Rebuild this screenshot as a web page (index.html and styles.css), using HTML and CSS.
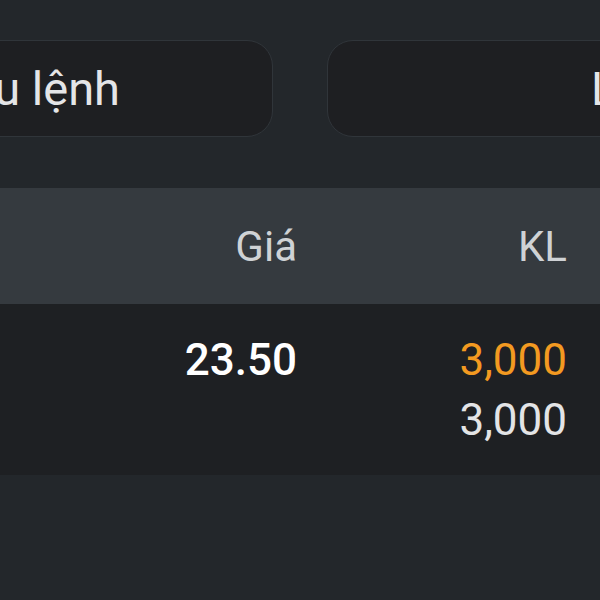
FILE: index.html
```html
<!DOCTYPE html>
<html lang="vi">
<head>
    <meta charset="UTF-8">
    <meta name="viewport" content="width=device-width, initial-scale=1.0">
    <title>Sổ lệnh</title>
    <link rel="stylesheet" href="styles.css">
</head>
<body>
<div class="screen">
    <div class="actions">
        <button class="action action-left">Lưu lệnh</button>
        <button class="action action-right">Lệnh mới</button>
    </div>

    <div class="table">
        <div class="row head">
            <div class="cell"></div>
            <div class="cell">Giá</div>
            <div class="cell">KL</div>
        </div>
        <div class="row body">
            <div class="cell"></div>
            <div class="cell price">23.50</div>
            <div class="cell">
                <div class="vol matched">3,000</div>
                <div class="vol">3,000</div>
            </div>
        </div>
    </div>
</div>
</body>
</html>
```

FILE: styles.css
```css
body {
    margin: 0;
    background-color: #23272b;
    font-family: Roboto, "Noto Sans", sans-serif;
    overflow: hidden;
}
.screen {
    width: 600px;
    height: 600px;
    overflow: hidden;
}
.actions {
    display: flex;
    gap: 54px;
    padding-top: 40px;
    margin-left: -230px;
    height: 97px;
    margin-bottom: 51px;
}
.action {
    flex: 0 0 503px;
    height: 97px;
    box-sizing: border-box;
    background-color: #1e1f22;
    border: 1px solid #30353a;
    border-radius: 26px;
    color: #e4e5e7;
    font-family: Roboto, "Noto Sans", sans-serif;
    font-size: 47px;
    display: flex;
    align-items: center;
    white-space: nowrap;
    overflow: hidden;
}
.action-left {
    justify-content: flex-end;
    padding-right: 152px;
}
.action-right {
    justify-content: flex-start;
    padding-left: 263px;
}
.row {
    display: grid;
    grid-template-columns: 1fr 200px 270px;
    padding-right: 33px;
    align-items: center;
}
.cell {
    text-align: right;
}
.head {
    height: 116px;
    background-color: #353a3f;
    color: #cfd2d5;
    font-size: 42px;
}
.body {
    background-color: #1e2023;
    padding: 26px 33px 25px 0;
    align-items: start;
    font-size: 44px;
}
.price {
    color: #ffffff;
    font-weight: 500;
    line-height: 60px;
}
.vol {
    line-height: 60px;
    color: #e3e4e6;
}
.vol.matched {
    color: #f39a21;
}
```
